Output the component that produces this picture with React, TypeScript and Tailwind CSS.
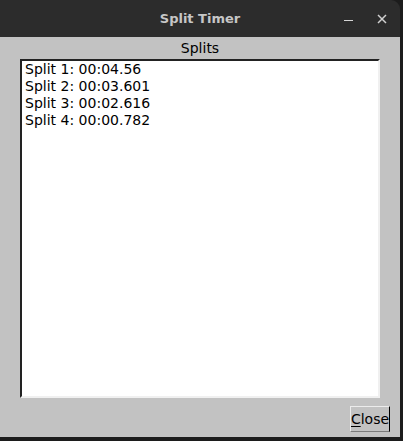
import React from 'react';

const splits = ['00:04.56', '00:03.601', '00:02.616', '00:00.782'];

export default function App() {
  return (
    <div className="w-[403px] h-[441px] bg-[#1c1c1c] overflow-hidden font-['DejaVu_Sans',sans-serif]">
      <div className="w-[400px] h-[437px] flex flex-col rounded-tr-[9px] overflow-hidden">
        {/* title bar */}
        <div className="h-[37px] bg-[#2c2c2c] relative flex items-center justify-center shrink-0">
          <span className="text-[13px] font-bold text-[#c6c6c6] mt-[1px]">Split Timer</span>
          <div className="absolute left-[344px] top-[20px] w-[9px] h-[1px] bg-[#d6d6d6]" />
          <svg className="absolute left-[377px] top-[14px]" width="10" height="10" viewBox="0 0 10 10">
            <path d="M1 1 L9 9 M9 1 L1 9" stroke="#d0d0d0" strokeWidth="1.5" />
          </svg>
        </div>

        {/* body */}
        <div className="flex-1 bg-[#c2c2c2] flex flex-col text-[14px] text-black">
          <div className="h-[22px] flex items-center justify-center">Splits</div>
          <div className="mx-[20px] h-[339px] bg-white border-2 border-t-[#222] border-l-[#222] border-b-[#f0f0f0] border-r-[#f0f0f0] px-[3px] leading-[17px]">
            {splits.map((s, i) => (
              <div key={i}>
                Split {i + 1}: {s}
              </div>
            ))}
          </div>
          <div className="flex justify-end pr-[10px] pt-[8px]">
            <button className="w-[40px] h-[26px] bg-[#c2c2c2] border border-t-[#ececec] border-l-[#ececec] border-b-[#7a7a7a] border-r-black flex items-center justify-center leading-none text-[14px] overflow-hidden">
              <span className="whitespace-nowrap">
                <span className="underline underline-offset-2">C</span>lose
              </span>
            </button>
          </div>
        </div>
      </div>
    </div>
  );
}
